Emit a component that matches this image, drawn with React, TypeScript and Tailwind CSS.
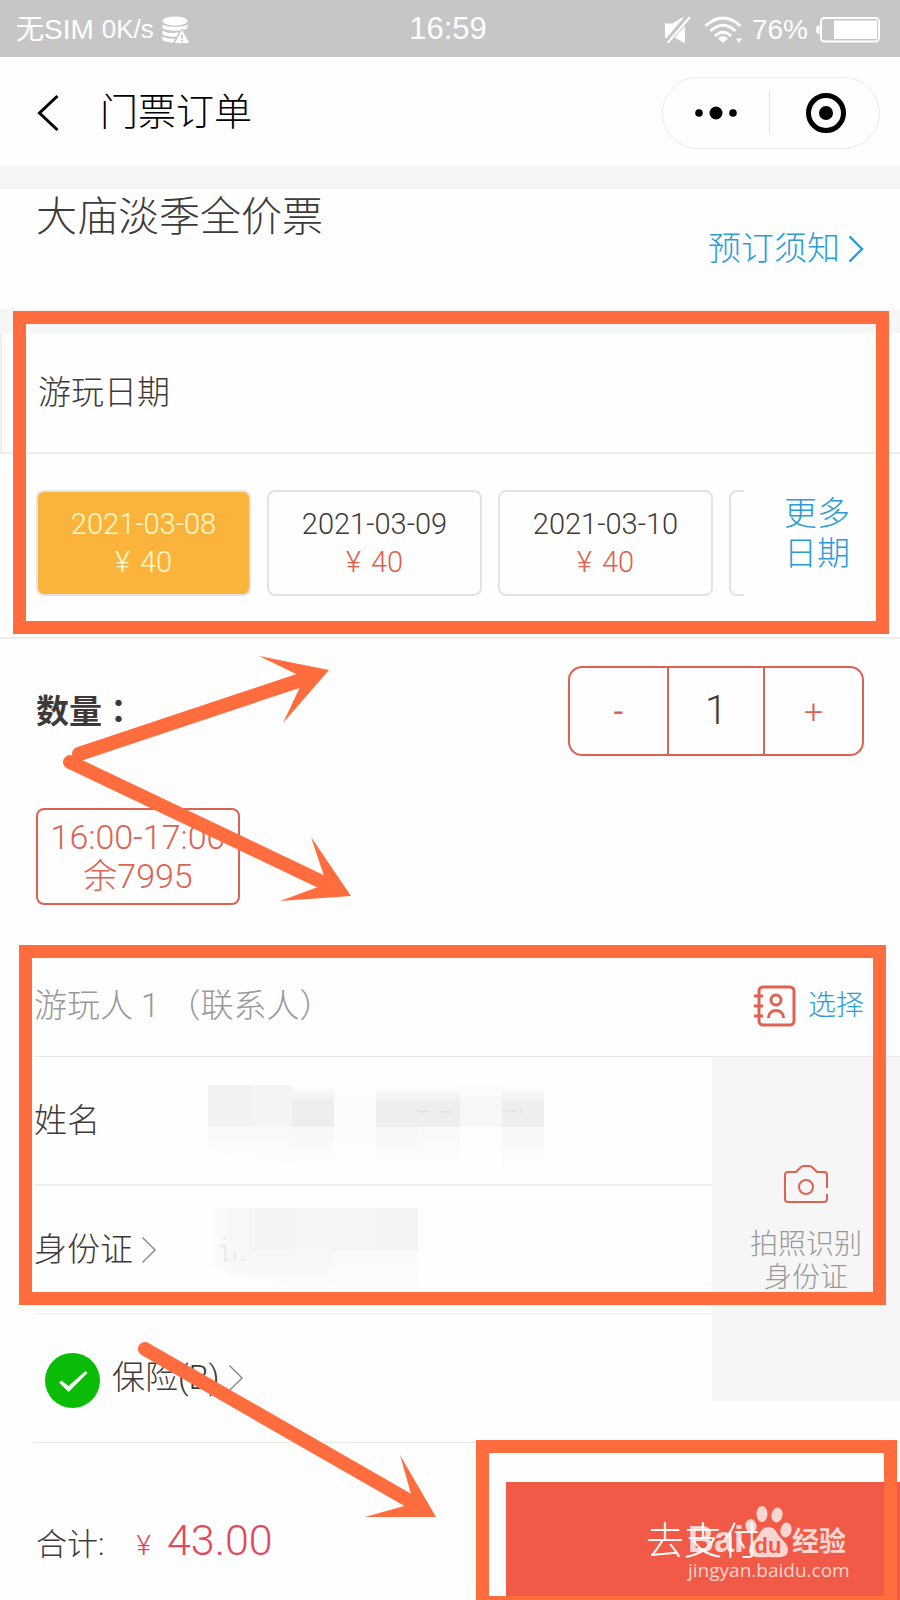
import { useState } from "react";

const DATES = [
  { date: "2021-03-08", price: 40 },
  { date: "2021-03-09", price: 40 },
  { date: "2021-03-10", price: 40 },
];

function StatusBar() {
  return (
    <div className="grid grid-cols-3 items-center h-[57px] pl-4 pr-5 pt-0.5 bg-[#c6c6c6] text-white font-normal font-['Liberation_Sans','Noto_Sans_CJK_SC',sans-serif]">
      <div className="flex items-center gap-2 whitespace-nowrap">
        <span className="text-[28px]">无SIM</span>
        <span className="text-[26px]">0K/s</span>
        <svg className="w-7 h-7" viewBox="0 0 28 28" fill="currentColor" aria-hidden="true">
          <ellipse cx="13" cy="5" rx="12.5" ry="4.5" />
          <path d="M.5 8.500c3 3 22 3 25 0v3.500c-3 3.500-22 3.500-25 0z" />
          <path d="M.5 14.500c3 2.500 12 3 16.500 2l-2.500 4c-5 .6-12 0-14-2.500z" />
          <path d="M.5 20.500c3 2 8 2.500 12.500 2.200L11.200 26.500C6 26.500 2 25.500.5 24z" />
          <path d="M20 13l8 14.500H12z" stroke="#c6c6c6" strokeWidth="1" />
          <path d="M20 18.500v4M20 24v1.800" stroke="#c6c6c6" strokeWidth="1.800" />
        </svg>
      </div>
      <div className="text-center text-[31px]">16:59</div>
      <div className="flex items-center justify-end gap-2">
        <svg className="w-7 h-7" viewBox="0 0 28 28" fill="currentColor" aria-hidden="true">
          <path d="M1 7.500h7.500L19 1v1.500L2.500 22H1z" />
          <path d="M21 10v17.500l-10.500-6z" />
          <path d="M26 1L3.500 27" stroke="currentColor" strokeWidth="2" />
        </svg>
        <svg className="w-10 h-7 ml-1" viewBox="0 0 40 28" fill="none" stroke="currentColor" strokeWidth="3" aria-hidden="true">
          <path d="M1.500 10Q19 -6 36.500 10" />
          <path d="M6.500 15Q19 3.500 31.500 15" />
          <path d="M11 20Q19 12.500 27 20" />
          <path d="M14 22.500q5-4.500 10 0l-5 4.500z" fill="currentColor" stroke="none" />
          <path d="M32 22.500h6L35 27z" fill="currentColor" stroke="none" />
        </svg>
        <span className="text-[28px]">76%</span>
        <svg className="w-16 h-7" viewBox="0 0 64 28" fill="none" aria-hidden="true">
          <path d="M3.500 9v9.500C1.500 18 0 17 0 13.800S1.500 9.500 3.500 9z" fill="currentColor" />
          <rect x="5" y="2" width="58" height="23.500" rx="3.500" stroke="currentColor" strokeWidth="2" />
          <rect x="18" y="4.500" width="43" height="18.500" fill="currentColor" />
        </svg>
      </div>
    </div>
  );
}

function NavBar() {
  return (
    <header className="flex items-center h-[108px] pt-[3px] pl-9 pr-5">
      <button type="button" aria-label="返回" className="pr-10">
        <svg className="w-6 h-10" viewBox="0 0 24 40" fill="none" stroke="#000" strokeWidth="3" aria-hidden="true">
          <path d="M21.500 3L3.500 20l18 17" />
        </svg>
      </button>
      <h1 className="flex-1 text-[38px] text-black">门票订单</h1>
      <div className="flex items-center w-[218px] h-[72px] rounded-full border border-[#ebebeb]">
        <button type="button" aria-label="更多" className="flex-1 flex justify-center">
          <svg className="w-11 h-4" viewBox="0 0 44 16" aria-hidden="true">
            <circle cx="5" cy="8" r="3.800" />
            <circle cx="22" cy="8" r="6.500" />
            <circle cx="39" cy="8" r="3.800" />
          </svg>
        </button>
        <div className="w-px h-[43px] bg-[#e2e2e2]" />
        <button type="button" aria-label="关闭" className="flex-1 flex justify-center pl-1">
          <svg className="w-10 h-10" viewBox="0 0 40 40" aria-hidden="true">
            <circle cx="20" cy="20" r="17.500" fill="none" stroke="#000" strokeWidth="5" />
            <circle cx="20" cy="20" r="7" />
          </svg>
        </button>
      </div>
    </header>
  );
}

function Chevron({ className }: { className: string }) {
  return (
    <svg className={className} viewBox="0 0 16 30" fill="none" stroke="currentColor" aria-hidden="true">
      <path d="M1 1.500L14.500 15 1 28.500" />
    </svg>
  );
}

// Thick round-ended line with a barbed head
function Arrow({ from, to, head }: { from: [number, number]; to: [number, number]; head: string }) {
  return (
    <g>
      <line x1={from[0]} y1={from[1]} x2={to[0]} y2={to[1]} stroke="#ff6d3f" strokeWidth="14" strokeLinecap="round" />
      <polygon points={head} fill="#ff6d3f" />
    </g>
  );
}

function NameMosaic() {
  const top = ["#f2f2f2", "#f4f4f4", "#ededed", "#fbfbfb", "#eeeeee", "#eeeeee", "#f7f7f7", "#eeeeee"];
  const bottom = ["#fafafa", "#f9f9f9", "#f8f8f8", "#fcfcfc", "#f7f7f7", "#f9f9f9", "#fdfdfd", "#f8f8f8"];
  return (
    <svg className="absolute left-0 top-0 w-[336px] h-[84px] pointer-events-none" viewBox="0 0 336 84" aria-hidden="true">
      <defs>
        <linearGradient id="fadeTop" x1="0" y1="0" x2="0" y2="1">
          <stop offset="0" stopColor="#fefefe" />
          <stop offset="1" stopColor="#fefefe" stopOpacity="0" />
        </linearGradient>
        <linearGradient id="fadeBottom" x1="0" y1="0" x2="0" y2="1">
          <stop offset="0.200" stopColor="#fefefe" stopOpacity="0" />
          <stop offset="1" stopColor="#fefefe" />
        </linearGradient>
      </defs>
      {top.map((c, i) => <rect key={i} x={i * 42} y="0" width="42" height="42" fill={c} />)}
      {bottom.map((c, i) => <rect key={i} x={i * 42} y="42" width="42" height="42" fill={c} />)}
      <rect x="84" y="0" width="252" height="18" fill="url(#fadeTop)" />
      <rect x="0" y="42" width="336" height="42" fill="url(#fadeBottom)" />
      <path d="M0 65L120 84H0z" fill="#fefefe" />
      <path d="M208 25l6 2 6-1M232 27h12M295 26h14M314 24l-2 4" stroke="#dddddd" fill="none" />
    </svg>
  );
}

function IdMosaic() {
  return (
    <svg className="absolute left-0 top-0 w-[210px] h-[84px] pointer-events-none" viewBox="0 0 210 84" aria-hidden="true">
      <defs>
        <linearGradient id="fadeLeft">
          <stop offset="0" stopColor="#fefefe" />
          <stop offset="1" stopColor="#fefefe" stopOpacity="0" />
        </linearGradient>
      </defs>
      <rect x="0" y="0" width="42" height="42" fill="#f7f7f7" />
      <rect x="42" y="0" width="42" height="42" fill="#f4f4f4" />
      <rect x="84" y="0" width="84" height="42" fill="#f5f5f5" />
      <rect x="168" y="0" width="42" height="42" fill="#f3f3f3" />
      <rect x="0" y="42" width="126" height="42" fill="#f7f7f7" />
      <rect x="126" y="42" width="84" height="42" fill="#fafafa" />
      <rect x="0" y="0" width="24" height="84" fill="url(#fadeLeft)" />
      <rect x="0" y="42" width="210" height="42" fill="url(#fadeBottom)" />
      <path d="M0 56Q40 78 130 84H0z" fill="#fefefe" />
      <path d="M15 29l3 3M12 38h5v16l5-4M27 44v10M33 52h4" stroke="#dcdcdc" fill="none" />
    </svg>
  );
}

function Watermark() {
  return (
    <div className="absolute right-[48px] top-[22px] w-[164px] text-white/75 pointer-events-none">
      <div className="flex items-end h-[54px] font-bold">
        <span className="font-['Liberation_Sans',sans-serif] text-[36px] leading-9">Bai</span>
        <div className="relative w-12 h-[52px]">
          <svg className="absolute inset-0 w-12 h-[52px]" viewBox="0 0 48 52" fill="currentColor" aria-hidden="true">
            <ellipse cx="7" cy="20" rx="5.500" ry="7" transform="rotate(-12 7 20)" />
            <ellipse cx="18" cy="8" rx="5.500" ry="8" />
            <ellipse cx="33" cy="9" rx="5.500" ry="7.500" transform="rotate(12 33 9)" />
            <ellipse cx="42" cy="24" rx="5.500" ry="7.500" transform="rotate(12 42 24)" />
            <path d="M24 21c6 0 8 4 11 9 4 5 9 8 9 14 0 7-6 8-20 7-12 1-19 0-19-7 0-6 6-9 9-14 3-5 5-9 10-9z" />
          </svg>
          <span className="absolute inset-x-0 bottom-0 text-center font-['Liberation_Sans',sans-serif] text-[22px] leading-6 text-[#f05a46]">du</span>
        </div>
        <span className="text-[27px] leading-8">经验</span>
      </div>
      <div className="font-['Open_Sans',sans-serif] font-medium text-[19px] leading-6">jingyan.baidu.com</div>
    </div>
  );
}

export default function App() {
  const [selected, setSelected] = useState(0);
  const [count, setCount] = useState(1);
  const [insured, setInsured] = useState(true);

  return (
    <div className="overflow-hidden bg-[#fefefe] text-[#3e3a39] font-light font-['Roboto','Noto_Sans_CJK_SC',sans-serif]">
      <StatusBar />
      <NavBar />

      {/* Ticket name */}
      <section className="flex justify-between h-36 px-9 border-t-24 border-[#f6f6f6]">
        <h2 className="pt-2 text-[41px] leading-10">大庙淡季全价票</h2>
        <a href="#notice" className="flex items-center gap-2 self-center text-[33px] text-[#2b9cd8]">
          预订须知
          <Chevron className="w-4 h-7 stroke-[2.5]" />
        </a>
      </section>

      {/* Play date */}
      <section className="relative border-t-24 border-t-[#f6f6f6] border-b-2 border-b-[#eeeeea]">
        <h2 className="flex items-center h-[121px] px-9 text-[33px] border-l-2 border-b-2 border-[#eeeeea]">游玩日期</h2>
        <div className="flex h-[183px] pt-9 pl-9">
          <div className="flex flex-1 gap-4 overflow-hidden">
            {DATES.map((d, i) => (
              <button
                key={d.date}
                type="button"
                aria-pressed={selected === i}
                onClick={() => setSelected(i)}
                className={`shrink-0 w-[215px] h-[106px] rounded-lg border-2 border-[#e3e3e3] text-[29px] leading-[38px] ${selected === i ? "bg-[#fab43c] text-[#fff8cf]" : ""}`}
              >
                <span className="block">{d.date}</span>
                <span className={`flex justify-center gap-2.5 ${selected === i ? "" : "text-[#e0604d]"}`}>
                  <span>¥</span>
                  <span>{d.price}</span>
                </span>
              </button>
            ))}
            <div className="shrink-0 w-[215px] h-[106px] rounded-lg border-2 border-[#e3e3e3]" />
          </div>
          <button type="button" className="w-[156px] h-[88px] pr-[50px] text-right text-[33px] leading-10 text-[#2b9cd8]">
            更多<br />日期
          </button>
        </div>
        <div className="absolute left-[13px] right-[11px] -top-[22px] bottom-[3px] border-13 border-[#ff6d3f] pointer-events-none" />
      </section>

      {/* Quantity and time slot */}
      <section className="relative h-[306px] pt-[27px] px-9">
        <div className="flex items-center justify-between">
          <label htmlFor="count" className="text-[33px] font-bold">
            数量<span className="font-['Noto_Sans_CJK_TC',sans-serif]">：</span>
          </label>
          <div className="flex w-[296px] h-[90px] rounded-[14px] border-2 border-[#dd6251] text-[#dd6251] divide-x-2 divide-[#dd6251]">
            <button type="button" aria-label="减少" className="flex-1 text-[34px] font-normal" onClick={() => setCount(Math.max(1, count - 1))}>-</button>
            <input
              id="count"
              inputMode="numeric"
              value={count}
              onChange={(e) => setCount(Number(e.target.value) || 1)}
              className="w-24 text-center text-[40px] text-[#3e3a39] outline-none"
            />
            <button type="button" aria-label="增加" className="flex-1 text-[34px]" onClick={() => setCount(count + 1)}>+</button>
          </div>
        </div>
        <button type="button" className="block w-[204px] h-[97px] mt-[52px] rounded-lg border-2 border-[#dd6251] text-[34px] leading-[39px] text-[#dd6251]">
          <span className="block whitespace-nowrap">16:00-17:00</span>
          <span className="block">余7995</span>
        </button>
        <svg className="absolute left-0 top-0 w-[400px] h-[300px] pointer-events-none" viewBox="0 639 400 300" aria-hidden="true">
          <Arrow from={[79, 754]} to={[298, 681]} head="329,670 259,656 296,674 300,687 283,723" />
          <Arrow from={[70, 762]} to={[322, 882]} head="351,896 311,837 324,876 318,887 280,901" />
        </svg>
      </section>

      {/* Visitor */}
      <section className="relative">
        <div className="flex items-center justify-between h-28 pt-2.5 ml-[34px] pr-9 border-b border-[#e9e9e4]">
          <h2 className="text-[33px] text-[#999999]">游玩人 1 （联系人）</h2>
          <button type="button" className="flex items-center gap-3 text-[28px] text-[#2b9cd8]">
            <svg className="w-[42px] h-[42px]" viewBox="0 0 42 42" fill="none" stroke="#dd6251" strokeWidth="3" aria-hidden="true">
              <rect x="5" y="2" width="35" height="38" rx="4" />
              <path d="M0 11h9M0 21h9M0 31h9" />
              <circle cx="22" cy="15" r="5" />
              <path d="M14.500 33c0-10 15-10 15 0" />
            </svg>
            选择
          </button>
        </div>
        <div className="flex items-start">
          <div className="flex-1 pl-[34px]">
            <div className="flex items-center h-[129px] border-b-2 border-[#eeeeea]">
              <label htmlFor="name" className="w-[174px] text-[33px]">姓名</label>
              <div className="relative w-[336px] h-[84px] mt-3">
                <NameMosaic />
                <input id="name" className="relative w-full h-full text-[33px] outline-none" />
              </div>
            </div>
            <div className="flex items-center h-32 border-b border-[#eeeeea]">
              <label htmlFor="idcard" className="flex items-center gap-2 w-[174px] text-[33px]">
                身份证
                <Chevron className="w-4 h-7 text-[#888888] stroke-[1.5]" />
              </label>
              <div className="relative w-[210px] h-[84px]">
                <IdMosaic />
                <input id="idcard" className="relative w-full h-full text-[33px] outline-none" />
              </div>
            </div>
            <div className="flex items-center gap-3 h-32 pl-[11px]">
              <span className="relative w-[55px] h-[55px] mt-1">
                <input
                  id="insurance"
                  type="checkbox"
                  checked={insured}
                  onChange={(e) => setInsured(e.target.checked)}
                  className="block w-[55px] h-[55px] appearance-none rounded-full border border-gray-300 checked:border-0 checked:bg-[#0abb07]"
                />
                {insured && (
                  <svg className="absolute inset-0 w-[55px] h-[55px] pointer-events-none" viewBox="0 0 55 55" aria-hidden="true">
                    <path d="M14 29.500l2.500-2 7 5.500 17-15 2 2L23.500 39z" fill="#fff" />
                  </svg>
                )}
              </span>
              <label htmlFor="insurance" className="flex items-center gap-2 text-[33px]">
                保险(B)
                <Chevron className="w-4 h-7 text-[#888888] stroke-[1.5]" />
              </label>
            </div>
          </div>
          <button type="button" className="flex flex-col items-center w-[188px] h-[344px] pt-[107px] bg-[#f6f6f6] text-[28px] leading-[33px] text-[#999999]">
            <svg className="w-11 h-10 mb-6" viewBox="0 0 44 40" fill="none" stroke="#dd6251" strokeWidth="2" aria-hidden="true">
              <path d="M43 24V11q0-3-3-3h-7l-4-4q-1.500-2-4-2h-5q-2.500 0-4 2l-4 4H4Q1 8 1 11v24q0 3 3 3h36q3 0 3-3v-5" />
              <circle cx="22" cy="23" r="7" />
            </svg>
            拍照识别<br />身份证
          </button>
        </div>
        <div className="absolute left-[19px] right-[14px] top-0 bottom-[137px] border-13 border-[#ff6d3f] pointer-events-none" />
      </section>

      {/* Total and pay */}
      <footer className="relative flex items-stretch">
        <div className="absolute left-[34px] right-0 top-0 h-px bg-[#e9e9e4]" />
        <div className="flex flex-1 items-baseline pl-9 pt-[66px] whitespace-nowrap">
          <span className="text-[31px]">合计:</span>
          <span className="pl-8 text-[28px] text-[#e4485c]">¥</span>
          <span className="pl-4 text-[43px] text-[#e4485c]">43.00</span>
        </div>
        <div className="relative w-[394px] pt-10">
          <button type="button" className="block w-full h-[118px] bg-[#f05a46] text-[38px] text-white">去支付</button>
          <div className="absolute inset-x-0 top-10 h-[118px]">
            <Watermark />
          </div>
          <div className="absolute -left-[30px] right-[3px] -top-[2px] -bottom-[9px] border-13 border-[#ff6d3f] pointer-events-none" />
        </div>
        <svg className="absolute left-[130px] -top-[110px] w-[320px] h-[200px] pointer-events-none" viewBox="130 1332 320 200" aria-hidden="true">
          <Arrow from={[145, 1349]} to={[408, 1500]} head="436,1517 400,1455 411,1494 404,1506 365,1517" />
        </svg>
      </footer>
    </div>
  );
}
